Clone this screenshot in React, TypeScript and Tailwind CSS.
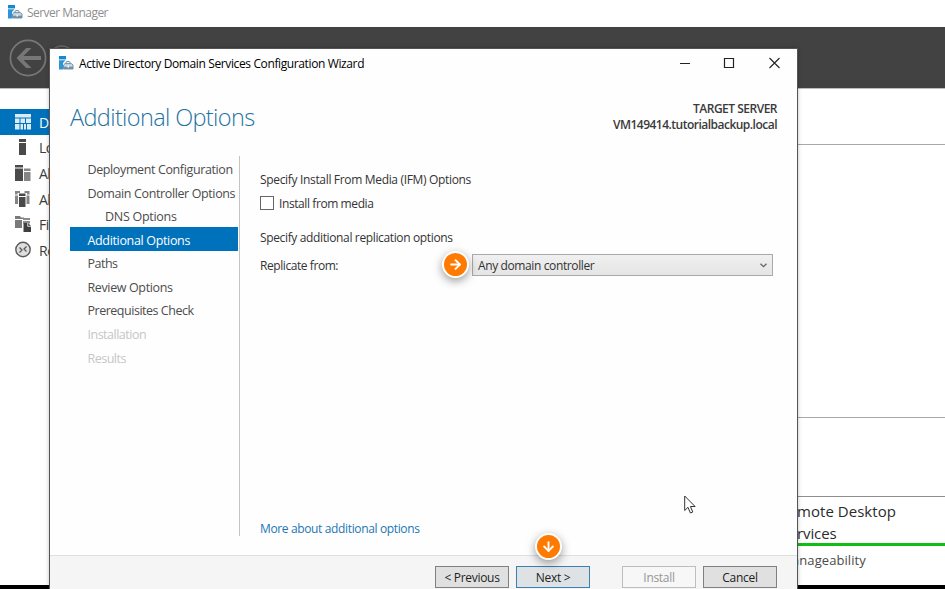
import type { ReactNode } from 'react';
import clsx from 'clsx';
import { ArrowDown, ArrowRight } from 'lucide-react';

interface WizardStep {
  label: string;
  tracking: string;
  state?: 'active' | 'disabled';
  nested?: boolean;
}

const STEPS: WizardStep[] = [
  { label: 'Deployment Configuration', tracking: 'tracking-[-0.38px]' },
  { label: 'Domain Controller Options', tracking: 'tracking-[-0.38px]' },
  { label: 'DNS Options', tracking: 'tracking-[-0.28px]', nested: true },
  { label: 'Additional Options', tracking: 'tracking-[-0.34px]', state: 'active' },
  { label: 'Paths', tracking: 'tracking-[-0.5px]' },
  { label: 'Review Options', tracking: 'tracking-[-0.37px]' },
  { label: 'Prerequisites Check', tracking: 'tracking-[-0.48px]' },
  { label: 'Installation', tracking: 'tracking-[-0.5px]', state: 'disabled' },
  { label: 'Results', tracking: 'tracking-[-0.5px]', state: 'disabled' },
];

function ServerManagerIcon() {
  return (
    <svg width="15" height="14" viewBox="0 0 15 14" className="shrink-0">
      <path d="M0 0h7v3.4H0z" fill="#1687d0" />
      <path d="M0 4.2h6.5L4 7v6.500H0z" fill="#2b95d8" />
      <path d="M7 7.800V6.600q0-1 1-1h2q1 0 1 1v1.200" fill="none" stroke="#6487a0" />
      <path d="M4.500 9L6 7.600h6.500L14 9v4H4.500z" fill="#c6d8e4" stroke="#6d8ba0" strokeWidth="0.9" />
      <path d="M4.500 10.700h9.500V13H4.500z" fill="#6f90a6" />
      <path d="M8.500 9.800h1.500v1.700H8.500z" fill="#fff" />
    </svg>
  );
}

function DashboardIcon() {
  return (
    <svg width="17" height="16" viewBox="0 0 17 16" fill="#d9ebf7" className="shrink-0">
      <path d="M0 0h16v3.500H0zM0 4.500h4.500V9H0zM0 10h4.500v5.500H0zM5.500 4.500H10V9H5.500zM5.500 10H8v5.500H5.500zM9 10h2v5.500H9zM11 4.500h5V9h-5zM12 10h4v5.500h-4z" />
    </svg>
  );
}

function LocalServerIcon() {
  return (
    <svg width="17" height="16" viewBox="0 0 17 16" fill="#4a4a4a" className="shrink-0">
      <path d="M4 0h7v3H4zM4 4h7v12H4z" />
    </svg>
  );
}

function AllServersIcon() {
  return (
    <svg width="17" height="16" viewBox="0 0 17 16" className="shrink-0">
      <path d="M0 0h8v2.500H0zM0 3.500h8V16H0z" fill="#4a4a4a" />
      <path d="M9 3.500h6.500V6H9zM9 7h6.500v9H9z" fill="#858585" />
    </svg>
  );
}

function DirectoryIcon() {
  return (
    <svg width="17" height="16" viewBox="0 0 17 16" className="shrink-0">
      <path d="M0 0h5v2H2.500v1.500H0zM0 4.500h3V13H0zM9.500 0h5v3.500H12V2H9.500zM11.500 4.500h3V13h-3z" fill="#858585" />
      <path d="M4 2.500h6.500V5H4zM4 6h6.500v10H4z" fill="#4a4a4a" />
    </svg>
  );
}

function FileServicesIcon() {
  return (
    <svg width="17" height="16" viewBox="0 0 17 16" className="shrink-0">
      <path d="M0 0h5l1 1.500h3V3H0zM0 4h7v8H0z" fill="#7a7a7a" />
      <path d="M8 2h7v2H8zM8 5h7v2.500H8z" fill="#8c8c8c" />
      <path d="M8.500 7h4.500l3 3v6H8.500z" fill="#3f3f3f" />
      <path d="M12.700 7v3.300H16" fill="none" stroke="#fff" strokeWidth="0.8" />
    </svg>
  );
}

function RemoteDesktopIcon() {
  return (
    <svg width="17" height="17" viewBox="0 0 17 17" fill="none" stroke="#5a5a5a" className="shrink-0">
      <circle cx="8" cy="8.500" r="7.200" fill="#dedede" strokeWidth="1.4" />
      <path d="M4.500 6.500L7 9l-2.500 2.500M11.500 5.500L9 8l2.500 2.500" strokeWidth="1.3" />
    </svg>
  );
}

const SIDEBAR_ITEMS: { label: string; icon: ReactNode; active?: boolean }[] = [
  { label: 'D', icon: <DashboardIcon />, active: true },
  { label: 'Lo', icon: <LocalServerIcon /> },
  { label: 'Al', icon: <AllServersIcon /> },
  { label: 'Al', icon: <DirectoryIcon /> },
  { label: 'Fi', icon: <FileServicesIcon /> },
  { label: 'Re', icon: <RemoteDesktopIcon /> },
];

function ServerManager() {
  return (
    <div className="flex h-full flex-col bg-white">
      <header className="flex h-[27px] items-start gap-[4px] pl-2 pt-[5px]">
        <ServerManagerIcon />
        <span className="text-[12px] leading-[15px] tracking-[-0.55px] text-[#8e8e8e]">Server Manager</span>
      </header>
      <div className="flex h-[61px] items-center gap-1 bg-[#424242] pl-[9px]">
        <svg width="38" height="38" viewBox="0 0 38 38" fill="none" stroke="#777">
          <circle cx="19" cy="19" r="17.600" strokeWidth="1.7" />
          <path d="M32 17v4H14.500l8 8h-5.300L7.500 19l9.700-10h5.300l-8 8z" fill="#777" stroke="none" />
        </svg>
        <svg width="24" height="26" viewBox="0 0 24 26" fill="none" stroke="#6a6a6a">
          <circle cx="11" cy="13" r="12" strokeWidth="1.5" />
        </svg>
      </div>
      <div className="flex h-[497px] justify-between border-t border-[#bdbdbd]">
        <nav className="w-[56px] pt-5">
          {SIDEBAR_ITEMS.map((item, index) => (
            <div
              key={index}
              className={clsx(
                'flex h-[25.6px] items-center gap-[7px] whitespace-nowrap pl-[15px] text-[14px] tracking-[-0.5px]',
                item.active ? 'bg-[#0072bc] text-white' : 'text-[#3c3c3c]',
              )}
            >
              {item.icon}
              <span className="pt-px">{item.label}</span>
            </div>
          ))}
        </nav>
        <main className="w-[148px] whitespace-nowrap text-[#2b2b2b]">
          <div className="h-[56px] border-b border-[#a8a8a8]" />
          <div className="h-[273px] border-b border-[#a8a8a8]" />
          <div className="h-[79px] border-b border-[#8f8f8f]" />
          <div className="h-[46px] pt-[3px] text-[15px] leading-[22px]">
            <p className="tracking-[0.04px]">mote Desktop</p>
            <p className="-tracking-[0.1px]">rvices</p>
          </div>
          <div className="h-[3px] bg-[#0fbf14]" />
          <p className="-ml-[5px] pt-[4px] text-[13px] leading-[20px] tracking-[0.07px] text-[#4a4a4a]">anageability</p>
        </main>
      </div>
      <div className="flex-1 bg-black" />
    </div>
  );
}

function WindowControls() {
  return (
    <svg width="102" height="12" viewBox="0 0 102 12" fill="none" stroke="#222">
      <path d="M1 6.500h10" />
      <path d="M45.500 1.500h9v9h-9z" strokeWidth="1.2" />
      <path d="M90.500 1l10 10M100.500 1l-10 10" strokeWidth="1.1" />
    </svg>
  );
}

function Marker({ children, className }: { children: ReactNode; className: string }) {
  return (
    <span
      className={clsx(
        'absolute flex size-[27px] items-center justify-center rounded-full border-2 border-white bg-[#ff7a00] text-white shadow-[0_3px_10px_rgba(0,0,0,0.4)]',
        className,
      )}
    >
      {children}
    </span>
  );
}

function WizardButton({ children, className }: { children: ReactNode; className?: string }) {
  return (
    <button
      className={clsx(
        'flex h-[22px] w-[74px] items-center justify-center border pt-[2px] text-[12px] tracking-[-0.3px]',
        className ?? 'border-[#808080] bg-[#e0e0e0] text-[#222]',
      )}
    >
      {children}
    </button>
  );
}

function Wizard() {
  return (
    <section className="absolute left-[49px] top-[48px] flex h-[560px] w-[749px] flex-col border border-[#555] bg-[#fefefe] shadow-[0_0_4px_rgba(0,0,0,0.25)]">
      <header className="flex h-[27px] items-center pl-[9px] pr-4">
        <ServerManagerIcon />
        <h1 className="ml-[5px] flex-1 pt-[2px] text-[12px] tracking-[-0.38px] text-black">
          Active Directory Domain Services Configuration Wizard
        </h1>
        <WindowControls />
      </header>

      <div className="flex h-[80px] items-start justify-between pl-5 pr-5">
        <h2 className="pt-[25px] text-[23.5px] font-light leading-[32px] tracking-[-0.63px] text-[#1f749f]">Additional Options</h2>
        <div className="pt-[25px] text-right text-[12px] leading-[16px] text-[#3a3a3a]">
          <p className="font-semibold tracking-[-0.5px]">TARGET SERVER</p>
          <p className="font-semibold tracking-[-0.51px]">VM149414.tutorialbackup.local</p>
        </div>
      </div>

      <div className="flex h-[399px] pl-5">
        <nav className="h-[380px] w-[170px] border-r border-[#c4c4c4] pt-[0.5px]">
          {STEPS.map((step) => (
            <div
              key={step.label}
              className={clsx(
                'flex h-[23.6px] w-[168px] items-center whitespace-nowrap pt-[4px] text-[12.5px]',
                step.nested ? 'pl-[35px]' : 'pl-[17.5px]',
                step.tracking,
                step.state === 'active' && 'bg-[#0072bc] text-white',
                step.state === 'disabled' && 'text-[#c6c6c6]',
                !step.state && 'text-[#4c4c4c]',
              )}
            >
              {step.label}
            </div>
          ))}
        </nav>

        <div className="flex w-[533px] flex-col pl-5 text-[12px] leading-[16px] text-[#333]">
          <p className="pt-4 tracking-[-0.33px]">Specify Install From Media (IFM) Options</p>
          <label className="mt-2 flex h-[17px] items-start gap-[5px]">
            <span className="size-[14px] border border-[#666] bg-white" />
            <span className="tracking-[-0.41px]">Install from media</span>
          </label>
          <p className="mt-[17px] tracking-[-0.36px]">Specify additional replication options</p>
          <div className="mt-2 flex h-[22px] items-center justify-between">
            <span className="pt-[2px] tracking-[-0.43px]">Replicate from:</span>
            <div className="flex h-[22px] w-[301px] items-center justify-between border border-[#aaa] bg-linear-to-b from-[#f0f0f0] to-[#e5e5e5] pl-[5px] pr-[5px]">
              <span className="pt-[2px] tracking-[-0.38px]">Any domain controller</span>
              <svg width="7" height="5" viewBox="0 0 7 5" fill="none" stroke="#666" strokeWidth="1.3">
                <path d="M0.500 0.700l3 3 3-3" />
              </svg>
            </div>
          </div>
          <a className="mt-[245px] tracking-[-0.36px] text-[#1c76b5]">More about additional options</a>
        </div>
      </div>

      <footer className="flex flex-1 items-start border-t border-[#dfdfdf] bg-[#f5f5f5] pl-[385px] pt-[10px]">
        <WizardButton>&lt; Previous</WizardButton>
        <span className="w-[7px]" />
        <WizardButton className="border-[#3c7fb1] bg-[#dfe2e4] text-[#222]">Next &gt;</WizardButton>
        <span className="w-[32px]" />
        <WizardButton className="border-[#bdbdbd] bg-[#f7f7f7] text-[#969696]">Install</WizardButton>
        <span className="w-[7px]" />
        <WizardButton>Cancel</WizardButton>
      </footer>

      <Marker className="left-[392px] top-[202px]">
        <ArrowRight size={15} strokeWidth={3} />
      </Marker>
      <Marker className="left-[485px] top-[484px]">
        <ArrowDown size={15} strokeWidth={3} />
      </Marker>
    </section>
  );
}

function Cursor() {
  return (
    <svg width="13" height="20" viewBox="0 0 13 20" className="absolute left-[684px] top-[495px]">
      <path d="M0.700 1v14.500l3.300-3.200 2.400 5.700 2.400-1-2.400-5.500h4.700z" fill="#fff" stroke="#333" />
    </svg>
  );
}

export default function App() {
  return (
    <div className="relative h-[589px] w-[945px] overflow-hidden font-['Open_Sans','Noto_Sans',sans-serif]">
      <ServerManager />
      <Wizard />
      <Cursor />
    </div>
  );
}
